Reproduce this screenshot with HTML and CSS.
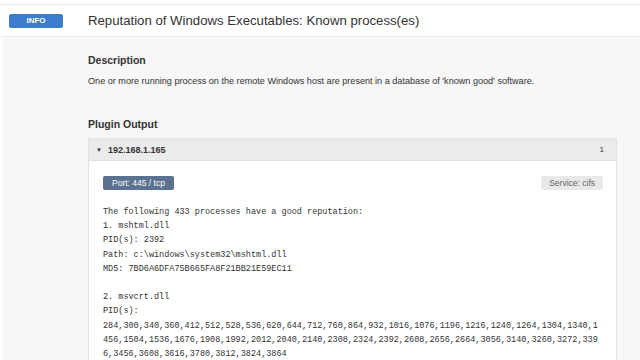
FILE: index.html
```html
<!DOCTYPE html>
<html>
<head>
<meta charset="utf-8">
<link rel="stylesheet" href="styles.css">
</head>
<body>
<div class="page">
  <header class="head">
    <span class="badge-info">INFO</span>
    <h1 class="title">Reputation of Windows Executables: Known process(es)</h1>
  </header>
  <main class="main">
    <section class="section">
      <h2 class="sec-title">Description</h2>
      <p class="sec-text">One or more running process on the remote Windows host are present in a database of 'known good' software.</p>
    </section>
    <section class="section output">
      <h2 class="sec-title">Plugin Output</h2>
      <div class="panel">
        <div class="panel-head">
          <span class="host"><span class="caret">&#9660;</span>192.168.1.165</span>
          <span class="count">1</span>
        </div>
        <div class="panel-body">
          <div class="tags">
            <span class="tag-port">Port: 445 / tcp</span>
            <span class="tag-svc">Service: cifs</span>
          </div>
<pre class="mono">The following 433 processes have a good reputation:
1. mshtml.dll
PID(s): 2392
Path: c:\windows\system32\mshtml.dll
MD5: 7BD6A6DFA75B665FA8F21BB21E59EC11

2. msvcrt.dll
PID(s):
284,300,340,360,412,512,528,536,620,644,712,760,864,932,1016,1076,1196,1216,1240,1264,1304,1340,1
456,1504,1536,1676,1908,1992,2012,2040,2140,2308,2324,2392,2608,2656,2664,3056,3140,3260,3272,339
6,3456,3608,3616,3780,3812,3824,3864</pre>
        </div>
      </div>
    </section>
  </main>
</div>
</body>
</html>
```
FILE: styles.css
```css
html, body {
  margin: 0;
  padding: 0;
  background: #ffffff;
  font-family: "Liberation Sans", Arial, sans-serif;
  color: #333;
}
.page {
  width: 640px;
  height: 360px;
  overflow: hidden;
  padding-top: 4px;
  box-sizing: border-box;
}
.head {
  display: flex;
  align-items: center;
  height: 33px;
  border-top: 1px solid #ececec;
  border-bottom: 1px solid #ececec;
  background: #fff;
  box-sizing: border-box;
}
.badge-info {
  margin-left: 9px;
  width: 54px;
  height: 14px;
  background: #3b7ccf;
  color: #fff;
  font-size: 8px;
  font-weight: bold;
  display: flex;
  align-items: center;
  justify-content: center;
  border-radius: 2px;
}
.title {
  margin: 0 0 0 25px;
  font-size: 13.2px;
  font-weight: normal;
  color: #333;
}
.main {
  background: #f7f7f7;
  margin-left: 3px;
  padding: 15px 23px 0 85px;
  height: 400px;
}
.section { margin: 0; }
.sec-title {
  margin: 0;
  font-size: 10.5px;
  font-weight: bold;
  color: #333;
  line-height: 16px;
}
.sec-text {
  margin: 7px 0 0 0;
  font-size: 9.1px;
  line-height: 12px;
  color: #333;
}
.output { margin-top: 29px; }
.panel {
  margin-top: 6px;
  border: 1px solid #e2e2e2;
  background: #fff;
}
.panel-head {
  display: flex;
  justify-content: space-between;
  align-items: center;
  height: 21px;
  background: #ebebeb;
  border-bottom: 1px solid #e0e0e0;
  padding: 0 12px 0 7px;
  font-size: 9px;
  font-weight: bold;
  color: #333;
}
.caret {
  font-size: 6px;
  margin-right: 6px;
  position: relative;
  top: -1px;
}
.count { font-weight: normal; font-size: 8px; }
.panel-body {
  padding: 15px 13px 0 14px;
}
.tags {
  display: flex;
  justify-content: space-between;
}
.tag-port {
  background: #5a7190;
  color: #fff;
  font-size: 8.5px;
  height: 14px;
  line-height: 14px;
  padding: 0 9px;
  border-radius: 2px;
}
.tag-svc {
  background: #e9e9e9;
  color: #666;
  font-size: 8.5px;
  height: 14px;
  line-height: 14px;
  padding: 0 8px;
  border-radius: 2px;
}
.mono {
  margin: 15px 0 0 0;
  font-family: "Liberation Mono", "Courier New", monospace;
  font-size: 8.5px;
  line-height: 14.2px;
  color: #333;
}
```
